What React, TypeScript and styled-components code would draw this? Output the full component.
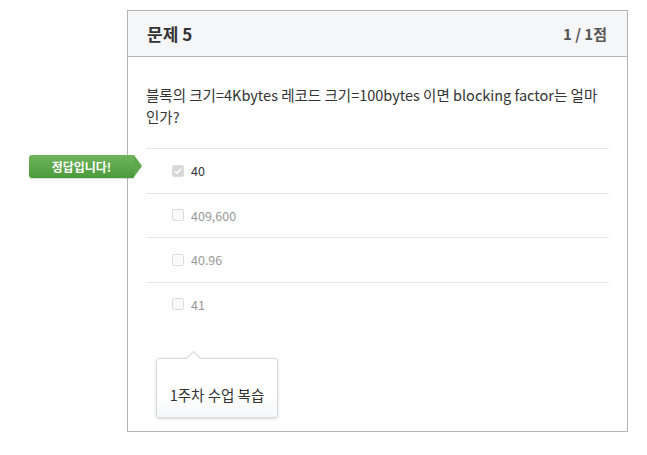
import React, { FunctionComponent } from 'react';
import styled, { createGlobalStyle } from 'styled-components';

const GlobalStyle = createGlobalStyle`
  body {
    margin: 0;
    background: #fff;
    font-family: 'Noto Sans CJK KR', 'Noto Sans', sans-serif;
  }
`;

const Page = styled.div`
  padding: 10px 0 0 127px;
`;

const QuizCard = styled.div`
  width: 499px;
  height: 420px;
  border: 1px solid #b4b4b4;
  box-sizing: content-box;
  position: relative;
`;

const CardHeader = styled.div`
  height: 45px;
  background: #f5f6f7;
  border-bottom: 1px solid #b4b4b4;
  display: flex;
  align-items: center;
  justify-content: space-between;
  padding: 0 20px 0 19px;
`;

const Title = styled.h2`
  margin: 0;
  font-size: 17px;
  font-weight: 700;
  color: #333;
`;

const Score = styled.span`
  font-size: 15px;
  font-weight: 700;
  color: #555;
`;

const CardBody = styled.div`
  padding: 27px 18px 0 18px;
`;

const Question = styled.p`
  margin: 0 0 20px;
  font-size: 14.5px;
  line-height: 22px;
  color: #333;
`;

const OptionList = styled.ul`
  list-style: none;
  margin: 0;
  padding: 0;
`;

const OptionRow = styled.li<{ $correct?: boolean }>`
  position: relative;
  height: 43.5px;
  border-top: 1px solid #e6e6e6;
  display: flex;
  align-items: center;
  padding-left: 26px;
  font-size: 12.5px;
  color: ${(p) => (p.$correct ? '#333' : '#999')};
`;

const CheckBox = styled.span<{ $checked?: boolean }>`
  width: 10px;
  height: 10px;
  border: 1px solid #dcdcdc;
  border-radius: 2px;
  background: ${(p) => (p.$checked ? '#d8d8d8' : '#fafafa')};
  margin-right: 7px;
  display: flex;
  align-items: center;
  justify-content: center;
`;

// green ribbon pointing at the right answer
const CorrectBadge = styled.div`
  position: absolute;
  left: -117px;
  top: 6px;
  width: 105px;
  height: 23px;
  background: linear-gradient(#6fb45c, #4b9b3b);
  border-radius: 3px 0 0 3px;
  color: #fff;
  font-size: 12px;
  font-weight: 700;
  display: flex;
  align-items: center;
  justify-content: center;
  box-shadow: 0 1px 1px rgba(0, 0, 0, 0.15);

  &::after {
    content: '';
    position: absolute;
    right: -8px;
    top: 0;
    border-style: solid;
    border-width: 11.5px 0 11.5px 8px;
    border-color: transparent transparent transparent #5ca84b;
  }
`;

const Hint = styled.div`
  position: relative;
  margin: 32px 0 0 10px;
  width: 122px;
  height: 60px;
  border: 1px solid #d8d8d8;
  border-radius: 3px;
  box-shadow: 0 1px 3px rgba(0, 0, 0, 0.15);
  background: linear-gradient(#fff 60%, #f6f7f8);
  box-sizing: border-box;
  display: flex;
  align-items: center;
  justify-content: center;
  padding-top: 13px;
  font-size: 14.5px;
  color: #333;

  &::before {
    content: '';
    position: absolute;
    top: -6px;
    left: 31px;
    width: 10px;
    height: 10px;
    background: #fff;
    border-left: 1px solid #d8d8d8;
    border-top: 1px solid #d8d8d8;
    transform: rotate(45deg);
  }
`;

const options = [
  { label: '40', correct: true },
  { label: '409,600' },
  { label: '40.96' },
  { label: '41' },
];

const App: FunctionComponent = () => {
  return (
    <Page>
      <GlobalStyle />
      <QuizCard>
        <CardHeader>
          <Title>문제 5</Title>
          <Score>1 / 1점</Score>
        </CardHeader>
        <CardBody>
          <Question>
            블록의 크기=4Kbytes 레코드 크기=100bytes 이면 blocking factor는 얼마
            인가?
          </Question>
          <OptionList>
            {options.map((option, index) => (
              <OptionRow key={index} $correct={option.correct}>
                {option.correct && <CorrectBadge>정답입니다!</CorrectBadge>}
                <CheckBox $checked={option.correct}>
                  {option.correct && (
                    <svg width="8" height="8" viewBox="0 0 8 8">
                      <path d="M1 4.2 L3.2 6.2 L7 1.5" stroke="#fff" strokeWidth="1.4" fill="none" />
                    </svg>
                  )}
                </CheckBox>
                {option.label}
              </OptionRow>
            ))}
          </OptionList>
          <Hint>1주차 수업 복습</Hint>
        </CardBody>
      </QuizCard>
    </Page>
  );
};

export default App;
